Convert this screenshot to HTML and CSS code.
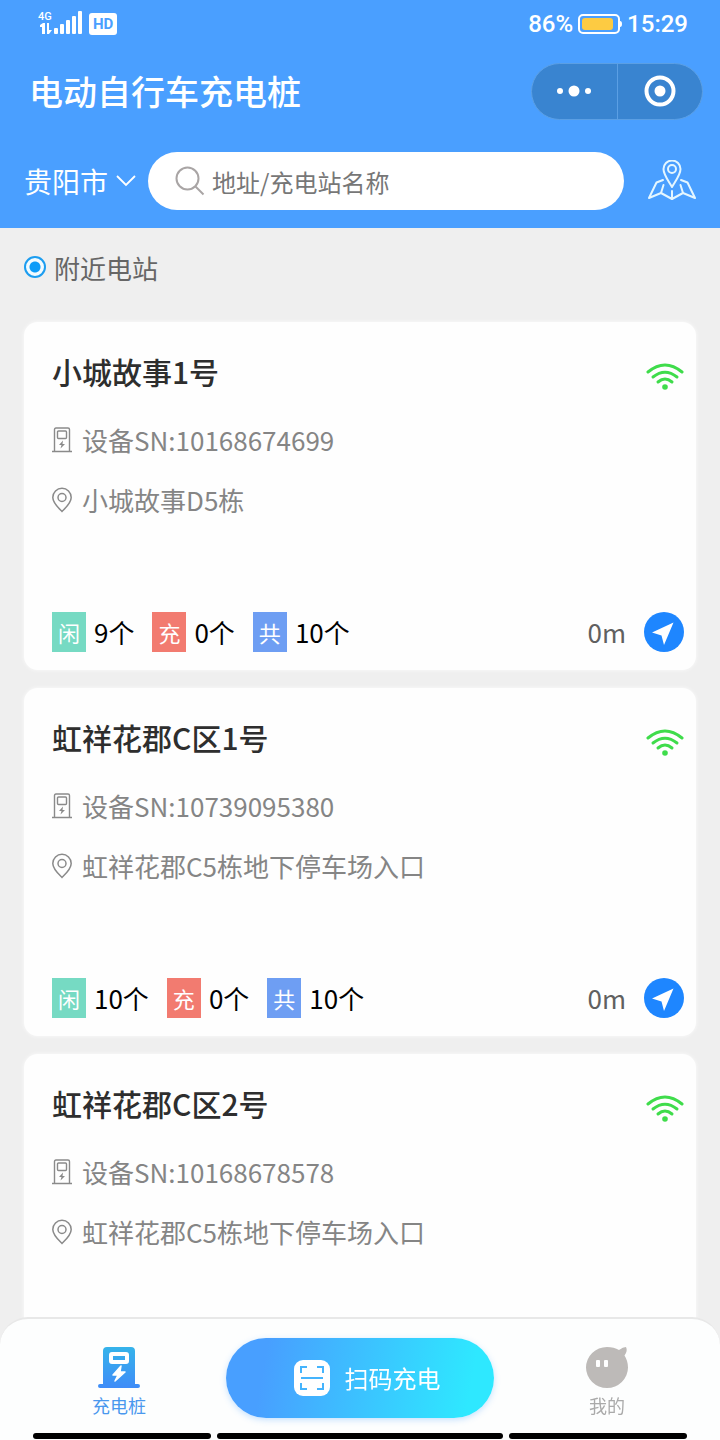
FILE: index.html
```html
<!DOCTYPE html>
<html lang="zh-CN">
<head>
    <meta charset="UTF-8">
    <meta name="viewport" content="width=device-width, initial-scale=1">
    <title>电动自行车充电桩</title>
    <link rel="stylesheet" href="styles.css">
</head>
<body>
    <!-- 公用图标 -->
    <svg class="sprite" aria-hidden="true">
        <symbol id="icon-wifi" viewBox="0 -7 38 40">
            <g fill="none" stroke="#3fdc4b" stroke-width="3" stroke-linecap="round">
                <path d="M2 14Q19 0 36 14"/>
                <path d="M7 19Q19 9.500 31 19"/>
                <path d="M12 24Q19 18 26 24"/>
            </g>
            <circle cx="19" cy="29" r="2.800" fill="#3fdc4b"/>
        </symbol>
        <symbol id="icon-device" viewBox="0 0 20 26">
            <g fill="none" stroke="#8a8a8a" stroke-width="1.400">
                <path d="M0 24.500H20M2.500 24.500V2.500Q2.500 1 4 1H16Q17.500 1 17.500 2.500V24.500"/>
                <rect x="5.500" y="4" width="9" height="7.500" rx="1"/>
            </g>
            <path d="M11 13.500L7 18H9.500L8.500 21.500L13 17H10.500Z" fill="#8a8a8a"/>
        </symbol>
        <symbol id="icon-pin" viewBox="0 0 20 26">
            <g fill="none" stroke="#8a8a8a" stroke-width="1.500">
                <path d="M10 24.500C7 21.500 0.800 16 0.800 10.500A9.200 9.200 0 0 1 19.200 10.500C19.200 16 13 21.500 10 24.500Z"/>
                <circle cx="10" cy="10.500" r="4"/>
            </g>
        </symbol>
        <symbol id="icon-nav" viewBox="0 0 40 40">
            <circle cx="20" cy="20" r="20" fill="#1e86ff"/>
            <path d="M29.500 10.500L8 20.500L17.500 23.500L20 33Z" fill="#fff"/>
        </symbol>
    </svg>

    <div class="page">
        <header class="header">
            <div class="status-bar">
                <div class="status-group">
                    <svg width="46" height="28" viewBox="0 0 46 28" fill="#fff">
                        <text class="net" x="0" y="10">4G</text>
                        <path d="M2 15L5 13H7V24H4V17H2ZM9 13H11V20H14L11 24H9Z"/>
                        <rect x="16" y="18" width="4" height="6" rx="1"/>
                        <rect x="22" y="14" width="4" height="10" rx="1"/>
                        <rect x="28" y="10" width="4" height="14" rx="1"/>
                        <rect x="34" y="6" width="4" height="18" rx="1"/>
                        <rect x="40" y="1" width="4" height="23" rx="1"/>
                    </svg>
                    <span class="hd">HD</span>
                </div>
                <div class="status-group">
                    <span>86%</span>
                    <svg width="44" height="20" viewBox="0 0 44 20">
                        <rect x="1" y="1" width="40" height="18" rx="4" fill="none" stroke="#fff" stroke-width="2"/>
                        <rect x="4" y="4" width="31" height="12" rx="3" fill="#fdcb42"/>
                        <path d="M42 7Q44 7 44 10T42 13Z" fill="#fff"/>
                    </svg>
                    <span>15:29</span>
                </div>
            </div>

            <div class="title-bar">
                <h1>电动自行车充电桩</h1>
                <div class="capsule">
                    <button type="button" aria-label="更多">
                        <svg width="36" height="14" viewBox="0 0 36 14" fill="#fff">
                            <circle cx="4" cy="7" r="3"/>
                            <circle cx="18" cy="7" r="5.500"/>
                            <circle cx="32" cy="7" r="3"/>
                        </svg>
                    </button>
                    <button type="button" aria-label="关闭">
                        <svg width="32" height="32" viewBox="0 0 32 32">
                            <circle cx="16" cy="16" r="13.500" fill="none" stroke="#fff" stroke-width="4"/>
                            <circle cx="16" cy="16" r="5.500" fill="#fff"/>
                        </svg>
                    </button>
                </div>
            </div>

            <form class="search-bar">
                <label class="city">
                    <select name="city" aria-label="城市">
                        <option>贵阳市</option>
                    </select>
                    <svg width="20" height="12" viewBox="0 0 20 12">
                        <path d="M1 1L10 10L19 1" fill="none" stroke="#fff" stroke-width="1.800"/>
                    </svg>
                </label>
                <label class="search-box">
                    <svg width="30" height="30" viewBox="0 0 30 30">
                        <g fill="none" stroke="#a9a5a5" stroke-width="2">
                            <circle cx="12.500" cy="12.500" r="11"/>
                            <path d="M20 20L28.500 28.500"/>
                        </g>
                    </svg>
                    <input type="search" name="keyword" aria-label="搜索" placeholder="地址/充电站名称">
                </label>
                <a class="map-link" href="#map" aria-label="地图">
                    <svg width="48" height="42" viewBox="0 0 48 42">
                        <g fill="none" stroke="#e4f6ff" stroke-width="2" stroke-linejoin="round" stroke-linecap="round">
                            <path d="M24 27C21 21.500 15.500 15 15.500 9A8.500 8.500 0 0 1 32.500 9C32.500 15 27 21.500 24 27Z"/>
                            <circle cx="24" cy="9" r="4"/>
                            <path d="M15 20L8.500 22.500L1 38L13 33L24 39L35 33L47 38L39.500 22.500L33 20"/>
                            <path d="M15.500 25L13 33M24 31V39M32.500 25L35 33"/>
                        </g>
                    </svg>
                </a>
            </form>
        </header>

        <main class="content">
            <label class="nearby">
                <input type="radio" name="scope" checked>
                附近电站
            </label>

            <div class="station-list">
                <article class="card">
                    <div class="card-head">
                        <h2>小城故事1号</h2>
                        <svg width="38" height="40"><use href="#icon-wifi"/></svg>
                    </div>
                    <p class="info"><svg width="20" height="26"><use href="#icon-device"/></svg>设备SN:10168674699</p>
                    <p class="info"><svg width="20" height="26"><use href="#icon-pin"/></svg>小城故事D5栋</p>
                    <div class="card-foot">
                        <span class="count"><i class="tag free">闲</i>9个</span>
                        <span class="count"><i class="tag busy">充</i>0个</span>
                        <span class="count"><i class="tag total">共</i>10个</span>
                        <span class="distance">0m</span>
                        <a class="nav-link" href="#nav" aria-label="导航"><svg width="40" height="40"><use href="#icon-nav"/></svg></a>
                    </div>
                </article>

                <article class="card">
                    <div class="card-head">
                        <h2>虹祥花郡C区1号</h2>
                        <svg width="38" height="40"><use href="#icon-wifi"/></svg>
                    </div>
                    <p class="info"><svg width="20" height="26"><use href="#icon-device"/></svg>设备SN:10739095380</p>
                    <p class="info"><svg width="20" height="26"><use href="#icon-pin"/></svg>虹祥花郡C5栋地下停车场入口</p>
                    <div class="card-foot">
                        <span class="count"><i class="tag free">闲</i>10个</span>
                        <span class="count"><i class="tag busy">充</i>0个</span>
                        <span class="count"><i class="tag total">共</i>10个</span>
                        <span class="distance">0m</span>
                        <a class="nav-link" href="#nav" aria-label="导航"><svg width="40" height="40"><use href="#icon-nav"/></svg></a>
                    </div>
                </article>

                <article class="card">
                    <div class="card-head">
                        <h2>虹祥花郡C区2号</h2>
                        <svg width="38" height="40"><use href="#icon-wifi"/></svg>
                    </div>
                    <p class="info"><svg width="20" height="26"><use href="#icon-device"/></svg>设备SN:10168678578</p>
                    <p class="info"><svg width="20" height="26"><use href="#icon-pin"/></svg>虹祥花郡C5栋地下停车场入口</p>
                    <div class="card-foot"></div>
                </article>
            </div>
        </main>

        <footer class="footer">
            <nav class="tabs">
                <a class="tab active" href="#station">
                    <svg width="42" height="42" viewBox="0 0 42 42">
                        <defs>
                            <linearGradient id="pileFill" x1="0" y1="0" x2="0" y2="1">
                                <stop offset="0" stop-color="#35b3ea"/>
                                <stop offset="1" stop-color="#3f8cf8"/>
                            </linearGradient>
                        </defs>
                        <path d="M5 37V4Q5 0 9 0H33Q37 0 37 4V37H40Q42 37 42 39T40 41H2Q0 41 0 39T2 37Z" fill="url(#pileFill)"/>
                        <rect x="13" y="7" width="16" height="8" rx="1" fill="none" stroke="#fff" stroke-width="4"/>
                        <path d="M23 19L15 28H20L17 34L27 25H22Z" fill="#fff" stroke="#fff" stroke-width="1.500" stroke-linejoin="round"/>
                    </svg>
                    充电桩
                </a>
                <button class="scan" type="button">
                    <svg width="36" height="36" viewBox="0 0 36 36">
                        <rect width="36" height="36" rx="9" fill="#fff"/>
                        <path d="M7 13V7H13M23 7H29V13M7 23V29H13M23 29H29V23M7 18H29" fill="none" stroke="#45b4fd" stroke-width="2"/>
                    </svg>
                    扫码充电
                </button>
                <a class="tab" href="#mine">
                    <svg width="42" height="42" viewBox="0 0 42 42">
                        <path d="M21 0Q28 0 33 3Q37 0 40 0Q42 4 38.500 8.500Q42 14 42 20.500A21 20.500 0 1 1 21 0Z" fill="#bdbab8"/>
                        <rect x="10" y="13" width="4" height="7" rx="1" fill="#fff"/>
                        <rect x="18" y="13" width="4" height="7" rx="1" fill="#fff"/>
                    </svg>
                    我的
                </a>
            </nav>
            <div class="home-bars"><span></span><span></span><span></span></div>
        </footer>
    </div>
</body>
</html>
```
FILE: styles.css
```css
:root {
    --primary: #4a9fff;
    --bg: #efefef;
    --text: #2e2e2e;
    --muted: #858585;
}

* {
    box-sizing: border-box;
}

body {
    margin: 0;
    font-family: "Noto Sans CJK SC", sans-serif;
    background: var(--bg);
    color: var(--text);
}

h1, h2, p {
    margin: 0;
}

svg {
    display: block;
    flex: none;
}

button, input, select {
    font-family: inherit;
}

button {
    padding: 0;
    border: none;
    background: none;
    cursor: pointer;
}

a {
    color: inherit;
    text-decoration: none;
}

.sprite {
    position: absolute;
    width: 0;
    height: 0;
}

.page {
    display: flex;
    flex-direction: column;
    height: 100vh;
}

/* 顶部 */
.header {
    flex: none;
    background: var(--primary);
    color: white;
}

.status-bar {
    display: flex;
    justify-content: space-between;
    align-items: center;
    height: 48px;
    padding: 0 32px 0 38px;
    font-family: Roboto, sans-serif;
    font-size: 24px;
    font-weight: 500;
}

.status-group {
    display: flex;
    align-items: center;
    gap: 5px;
}

.net {
    font-size: 11px;
}

.hd {
    padding: 0 4px;
    border-radius: 3px;
    background: white;
    color: var(--primary);
    font-size: 15px;
    line-height: 22px;
    font-weight: 700;
}

.title-bar {
    display: flex;
    justify-content: space-between;
    align-items: center;
    height: 88px;
    padding: 0 17px 2px 29px;
}

.title-bar h1 {
    font-size: 34px;
    line-height: 48px;
    font-weight: 500;
}

.capsule {
    display: flex;
    width: 172px;
    height: 57px;
    border: 1px solid #5b9fe4;
    border-radius: 29px;
    background: #3984d0;
}

.capsule button {
    flex: 1;
    display: flex;
    justify-content: center;
    align-items: center;
}

.capsule button + button {
    border-left: 1px solid #5b9fe4;
}

.search-bar {
    display: flex;
    align-items: center;
    gap: 12px;
    padding: 16px 24px 18px;
}

.city {
    display: flex;
    align-items: center;
    gap: 7px;
}

.city select {
    padding: 0;
    border: none;
    appearance: none;
    background: none;
    color: white;
    font-size: 28px;
}

.search-box {
    flex: 1;
    display: flex;
    align-items: center;
    gap: 7px;
    height: 58px;
    padding: 0 27px;
    border-radius: 29px;
    background: white;
}

.search-box input {
    flex: 1;
    min-width: 0;
    padding: 0;
    border: none;
    outline: none;
    background: none;
    font-size: 24px;
}

.search-box input::placeholder {
    color: #777;
}

.map-link {
    margin-left: 12px;
}

/* 列表 */
.content {
    flex: 1;
    min-height: 0;
    overflow-y: auto;
    scrollbar-width: none;
    padding: 0 24px 120px;
}

.nearby {
    display: flex;
    align-items: center;
    gap: 8px;
    height: 78px;
    margin-bottom: 16px;
    color: #666;
    font-size: 26px;
}

.nearby input {
    appearance: none;
    width: 22px;
    height: 22px;
    margin: 0;
    border: 2px solid #1c9df0;
    border-radius: 50%;
    background: radial-gradient(circle, #0d9cf8 5px, #f2fbff 6px);
}

.station-list {
    display: flex;
    flex-direction: column;
    gap: 18px;
}

.card {
    padding: 28px 12px 18px 28px;
    border-radius: 14px;
    background: #fefefe;
    box-shadow: 0 0 4px rgba(255, 255, 255, 0.8);
}

.card-head {
    display: flex;
    justify-content: space-between;
    align-items: center;
    margin-bottom: 18px;
}

.card-head h2 {
    font-size: 30px;
    line-height: 42px;
    font-weight: 500;
}

.info {
    display: flex;
    align-items: center;
    gap: 10px;
    color: var(--muted);
    font-size: 26px;
    line-height: 60px;
}

.card-foot {
    display: flex;
    align-items: center;
    min-height: 40px;
    margin-top: 82px;
    font-size: 26px;
    line-height: 40px;
}

.count {
    display: flex;
    gap: 8px;
    margin-right: 18px;
    color: #000;
}

.tag {
    width: 34px;
    color: white;
    font-size: 22px;
    font-style: normal;
    text-align: center;
}

.free {
    background: #76dac3;
}

.busy {
    background: #f27b70;
}

.total {
    background: #6e9ef3;
}

.distance {
    margin-left: auto;
    color: #606060;
}

.nav-link {
    margin-left: 18px;
}

/* 底部导航 */
.footer {
    position: fixed;
    left: 0;
    right: 0;
    bottom: 0;
    border-top: 2px solid #e8e8e8;
    border-radius: 28px 28px 0 0;
    background: #fdfefe;
}

.tabs {
    display: grid;
    grid-template-columns: 1fr 268px 1fr;
    align-items: center;
    padding: 18px 0 15px;
}

.tab {
    display: flex;
    flex-direction: column;
    align-items: center;
    gap: 3px;
    padding-top: 10px;
    color: #aaa;
    font-size: 18px;
    line-height: 26px;
}

.tab.active {
    padding-left: 12px;
    color: #4a98ee;
}

.scan {
    display: flex;
    justify-content: center;
    align-items: center;
    gap: 15px;
    height: 80px;
    padding-left: 14px;
    border-radius: 40px;
    background: linear-gradient(100deg, #489fff 15%, #2ee8ff 90%);
    box-shadow: 0 2px 6px rgba(74, 159, 255, 0.3);
    color: white;
    font-size: 24px;
}

.home-bars {
    display: flex;
    gap: 6px;
    padding: 0 33px 1px;
}

.home-bars span {
    flex: 5;
    height: 6px;
    border-radius: 3px;
    background: #000;
}

.home-bars span:nth-child(2) {
    flex: 8;
}
```
